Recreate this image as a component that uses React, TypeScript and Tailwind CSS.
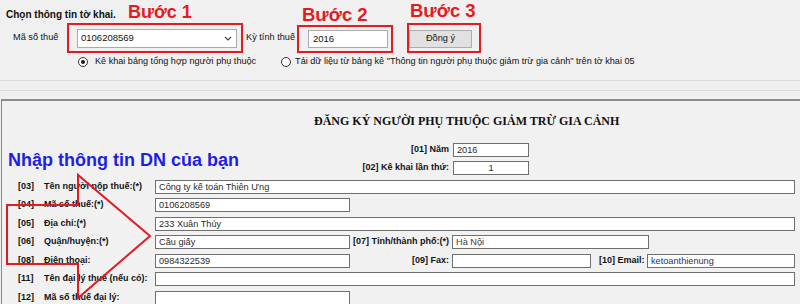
import type { ReactNode } from "react";

const font = { fontFamily: '"Liberation Sans", Arial, sans-serif' };

function Box({ w, value, center, tone }: { w: string; value?: string; center?: boolean; tone?: string }) {
  return (
    <div
      className={`h-[14px] shrink-0 overflow-hidden whitespace-nowrap border border-[#6f6f6f] bg-white px-[3px] text-[9.2px] leading-[12px] ${w} ${
        center ? "text-center" : ""
      } ${tone ?? "text-[#2a2a2a]"}`}
    >
      {value}
    </div>
  );
}

function Row({ code, label, children }: { code: string; label: string; children: ReactNode }) {
  return (
    <div className="flex h-[14px] items-center pl-[16px] text-[9px] text-[#111]">
      <span className="w-[26px] shrink-0 font-bold">{code}</span>
      <span className="w-[111px] shrink-0 whitespace-nowrap font-bold">{label}</span>
      {children}
    </div>
  );
}

function Radio({ checked }: { checked?: boolean }) {
  return (
    <span className="flex h-[10px] w-[10px] shrink-0 items-center justify-center rounded-full border border-[#333] bg-white">
      {checked && <span className="h-[4px] w-[4px] rounded-full bg-[#1a1a1a]" />}
    </span>
  );
}

export default function App() {
  return (
    <div className="relative h-[304px] w-[800px] overflow-hidden bg-[#f0f0f0] text-[#111]" style={font}>
      {/* top: chọn thông tin tờ khai */}
      <div className="h-[23px] pl-[6px] pt-[9px] text-[10px] font-bold leading-[12px]">Chọn thông tin tờ khai.</div>

      <div className="flex h-[30px] items-center text-[9.2px]">
        <span className="w-[67px] shrink-0 pl-[13px]">Mã số thuế</span>
        <div className="flex h-[30px] w-[176px] shrink-0 items-center border-2 border-[#e31b23] pl-[8px]">
          <div className="flex h-[19px] w-[160px] items-center justify-between border border-[#ababab] bg-white pl-[3px] pr-[4px]">
            <span className="text-[9.5px]">0106208569</span>
            <svg width="8" height="5" viewBox="0 0 8 5" fill="none">
              <path d="M1 1l3 3 3-3" stroke="#444" strokeWidth="1.2" />
            </svg>
          </div>
        </div>
        <span className="w-[54px] shrink-0 pl-[3px]">Kỳ tính thuế</span>
        <div className="mt-[2px] flex h-[28px] w-[96px] shrink-0 items-center border-2 border-[#e31b23] pl-[9px]">
          <div className="flex h-[18px] w-[80px] items-center border border-[#ababab] bg-white pl-[4px] text-[9.5px]">2016</div>
        </div>
        <div className="ml-[14px] flex h-[30px] w-[74px] shrink-0 items-center border-2 border-[#e31b23] pt-[2px]">
          <div className="flex h-[18px] w-[63px] items-center justify-center border border-[#adadad] bg-[#e1e1e1] text-[9.2px]">
            Đồng ý
          </div>
        </div>
      </div>

      <div className="flex h-[18px] items-center pl-[78px] text-[9.1px]">
        <Radio checked />
        <span className="ml-[7px]">Kê khai bảng tổng hợp người phụ thuộc</span>
        <span className="ml-[25px]">
          <Radio />
        </span>
        <span className="ml-[4px]">
          Tải dữ liệu từ bảng kê "Thông tin người phụ thuộc giảm trừ gia cảnh" trên tờ khai 05
        </span>
      </div>

      <div className="mt-[9px] h-px bg-[#dadada]" />
      <div className="mt-[9px] h-px bg-[#dadada]" />

      {/* tờ khai */}
      <div className="ml-[1px] mt-[8px] h-[220px] border-l border-t-2 border-[#8a8a8a] bg-[#f1f1f1]">
        <div
          className="pl-[312px] pt-[13px] text-[12px] font-bold leading-[14px]"
          style={{ fontFamily: '"Liberation Serif", "Times New Roman", serif' }}
        >
          ĐĂNG KÝ NGƯỜI PHỤ THUỘC GIẢM TRỪ GIA CẢNH
        </div>

        <div className="mt-[14.5px] flex flex-col gap-[4.5px] text-[9px]">
          <div className="flex h-[14px] items-center">
            <span className="w-[447px] shrink-0 text-right font-bold">[01] Năm</span>
            <span className="w-[4px]" />
            <Box w="w-[76px]" value="2016" />
          </div>
          <div className="flex h-[14px] items-center">
            <span className="w-[447px] shrink-0 text-right font-bold">[02] Kê khai lần thứ:</span>
            <span className="w-[4px]" />
            <Box w="w-[76px]" value="1" center />
          </div>

          <Row code="[03]" label="Tên người nộp thuế:(*)">
            <Box w="w-[640px]" value="Công ty kế toán Thiên Ưng" />
          </Row>
          <Row code="[04]" label="Mã số thuế:(*)">
            <Box w="w-[195px]" value="0106208569" />
          </Row>
          <Row code="[05]" label="Địa chỉ:(*)">
            <Box w="w-[640px]" value="233 Xuân Thủy" />
          </Row>
          <Row code="[06]" label="Quận/huyện:(*)">
            <Box w="w-[195px]" value="Cầu giấy" />
            <span className="w-[102px] shrink-0 whitespace-nowrap pr-[3px] text-right font-bold">
              [07] Tỉnh/thành phố:(*)
            </span>
            <Box w="w-[197px]" value="Hà Nội" tone="text-[#3a3a3a]" />
          </Row>
          <Row code="[08]" label="Điện thoại:">
            <Box w="w-[195px]" value="0984322539" />
            <span className="w-[102px] shrink-0 pr-[3px] text-right font-bold">[09] Fax:</span>
            <Box w="w-[139px]" />
            <span className="w-[56px] shrink-0 pl-[8px] font-bold">[10] Email:</span>
            <Box w="w-[148px]" value="ketoanthienung" tone="text-[#2e2e5c]" />
          </Row>
          <Row code="[11]" label="Tên đại lý thuế (nếu có):">
            <Box w="w-[640px]" />
          </Row>
          <Row code="[12]" label="Mã số thuế đại lý:">
            <Box w="w-[195px]" />
          </Row>
        </div>
      </div>

      {/* chú thích */}
      <span className="absolute left-[128px] top-[3px] text-[18px] font-bold leading-[18px] text-[#e31b23]">Bước 1</span>
      <span className="absolute left-[302px] top-[6px] text-[18.5px] font-bold leading-[18px] text-[#e31b23]">Bước 2</span>
      <span className="absolute left-[410px] top-[2px] text-[18.5px] font-bold leading-[18px] text-[#e31b23]">Bước 3</span>
      <span className="absolute left-[8px] top-[151px] whitespace-nowrap text-[18px] font-bold leading-[18px] text-[#1e1ee6]">
        Nhập thông tin DN của bạn
      </span>
      <svg className="pointer-events-none absolute left-0 top-0" width="800" height="304" viewBox="0 0 800 304">
        <polygon
          points="7,205 78,205 78,175 150,236 78,298 78,264 7,264"
          fill="none"
          stroke="#e31b23"
          strokeWidth="2"
          strokeLinejoin="miter"
        />
      </svg>
    </div>
  );
}
